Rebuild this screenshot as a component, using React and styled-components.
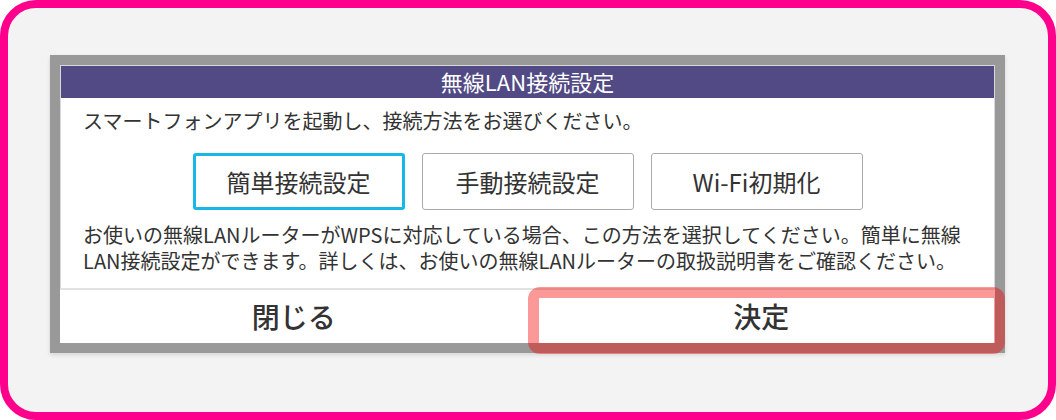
import styled, { createGlobalStyle } from "styled-components";

const GlobalStyle = createGlobalStyle`
  html, body {
    margin: 0;
    padding: 0;
    background: #ffffff;
  }
  body {
    font-family: "Noto Sans CJK JP", "Noto Sans", sans-serif;
  }
`;

const Frame = styled.div`
  box-sizing: border-box;
  width: 1056px;
  height: 420px;
  border: 8px solid #ff008c;
  border-radius: 36px;
  background: #f3f3f3;
  padding: 47px 0 0 42px;
`;

const Dialog = styled.div`
  box-sizing: border-box;
  width: 955px;
  height: 298px;
  border: 10px solid #999999;
  background: #ffffff;
  box-shadow: 0 2px 4px rgba(0, 0, 0, 0.12), inset 0 0 0 1px #d8d8d8;
  display: flex;
  flex-direction: column;
`;

const TitleBar = styled.div`
  height: 32px;
  background: #524a84;
  border: 1px solid #d8d8d8;
  border-bottom: 0;
  color: #ffffff;
  font-size: 22px;
  line-height: 31px;
  text-align: center;
`;

const Body = styled.div`
  padding: 10px 0 14px 23px;
  color: #333333;
  font-size: 20px;
  line-height: 26px;
`;

const Intro = styled.p`
  margin: 0;
`;

const Options = styled.div`
  display: flex;
  justify-content: center;
  gap: 17px;
  margin: 19px 23px 12px 0;
`;

const Option = styled.button`
  box-sizing: border-box;
  width: 212px;
  height: 57px;
  background: #ffffff;
  border: ${(p) => (p.$active ? "3px solid #17b8e8" : "1px solid #aaaaaa")};
  border-radius: 3px;
  font-family: inherit;
  font-size: 24px;
  color: #333333;
  padding: 0;
`;

const Note = styled.p`
  margin: 0;
  padding-right: 10px;
`;

const Footer = styled.div`
  flex: 1;
  display: flex;
  border-top: 2px solid #e2e2e2;
`;

const FooterButton = styled.button`
  position: relative;
  flex: 1;
  background: #ffffff;
  border: 0;
  padding: 0 0 2px;
  font-family: inherit;
  font-size: 28px;
  font-weight: 500;
  color: #333333;
`;

const Highlight = styled.span`
  position: absolute;
  top: -3px;
  left: 0;
  right: -10px;
  bottom: -11px;
  border: 11px solid rgba(245, 0, 0, 0.4);
  border-radius: 12px;
  pointer-events: none;
`;

export default function App() {
  return (
    <>
      <GlobalStyle />
      <Frame>
        <Dialog>
          <TitleBar>無線LAN接続設定</TitleBar>
          <Body>
            <Intro>スマートフォンアプリを起動し、接続方法をお選びください。</Intro>
            <Options>
              <Option $active>簡単接続設定</Option>
              <Option>手動接続設定</Option>
              <Option>Wi-Fi初期化</Option>
            </Options>
            <Note>
              お使いの無線LANルーターがWPSに対応している場合、この方法を選択してください。簡単に無線LAN接続設定ができます。詳しくは、お使いの無線LANルーターの取扱説明書をご確認ください。
            </Note>
          </Body>
          <Footer>
            <FooterButton>閉じる</FooterButton>
            <FooterButton>
              決定
              <Highlight />
            </FooterButton>
          </Footer>
        </Dialog>
      </Frame>
    </>
  );
}
